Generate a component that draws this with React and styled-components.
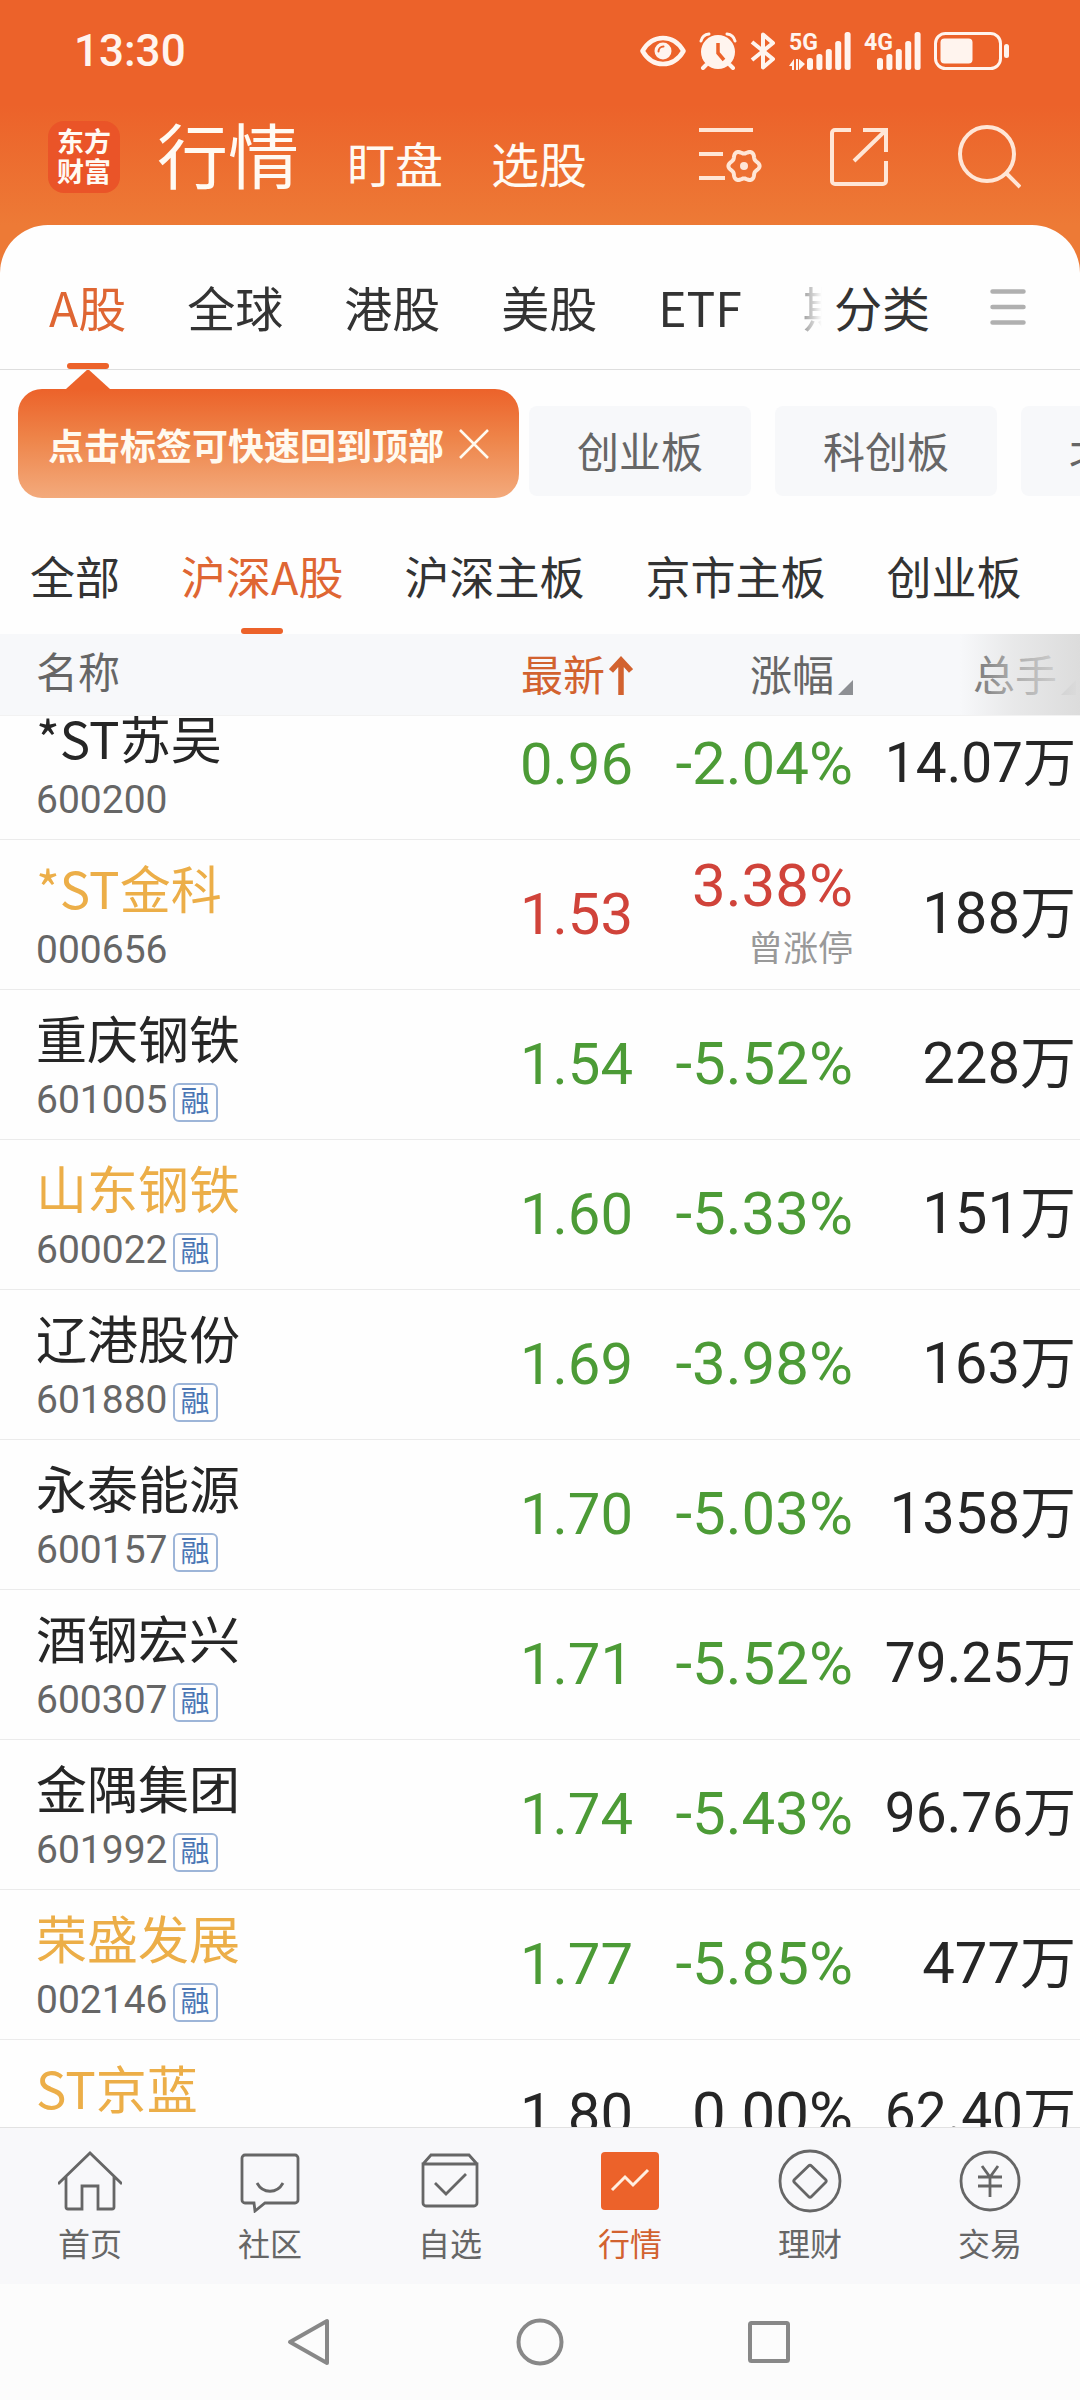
import React from "react";
import styled, { createGlobalStyle, css } from "styled-components";

const ORANGE = "#ec622a";
const INK = "#333333";
const GREY = "#666666";

const cjk = `"Noto Sans CJK SC", sans-serif`;
const digits = `Roboto, "Noto Sans CJK SC", sans-serif`;

const GlobalStyle = createGlobalStyle`
  * {
    box-sizing: border-box;
  }

  body {
    margin: 0;
    font-family: ${cjk};
    color: ${INK};
  }

  button {
    border: 0;
    padding: 0;
    background: none;
    font: inherit;
    color: inherit;
    white-space: nowrap;
    cursor: pointer;
  }

  svg {
    display: block;
    flex: none;
  }
`;

const Screen = styled.div`
  display: flex;
  flex-direction: column;
  height: 100vh;
  overflow: hidden;
  background: linear-gradient(${ORANGE} 105px, #ed7a36 225px);
`;

const StatusBar = styled.div`
  display: flex;
  flex: none;
  align-items: center;
  justify-content: space-between;
  height: 102px;
  padding: 0 70px 0 74px;
  color: #fff4ee;
`;

const Clock = styled.time`
  font: 500 44px/48px ${digits};
`;

const StatusIcons = styled.div`
  display: flex;
  align-items: center;
  gap: 13px;
`;

const TitleBar = styled.header`
  display: flex;
  flex: none;
  align-items: center;
  height: 123px;
  padding: 0 59px 14px 48px;
  color: #fffaf3;
`;

const Logo = styled.div`
  display: flex;
  flex-direction: column;
  justify-content: center;
  width: 72px;
  height: 72px;
  margin-right: 37px;
  padding-bottom: 2px;
  border-radius: 16px;
  background: #ea5428;
  font: 700 27px/30px ${cjk};
  text-align: center;
`;

const Modes = styled.nav`
  display: flex;
  flex: 1;
  align-items: baseline;
  gap: 48px;
`;

const Mode = styled.button`
  font-size: ${(p) => (p.$active ? 71 : 48)}px;
  line-height: 72px;
`;

const Tools = styled.div`
  display: flex;
  align-items: center;
  gap: 66px;
  color: #ffe6d6;
`;

const Sheet = styled.main`
  display: flex;
  flex: 1;
  flex-direction: column;
  min-height: 0;
  border-radius: 48px 48px 0 0;
  background: #fefefe;
`;

const MarketBar = styled.div`
  display: flex;
  flex: none;
  height: 145px;
  border-bottom: 1px solid #dedede;
`;

const MarketTabs = styled.nav`
  display: flex;
  flex: 1;
  gap: 61px;
  min-width: 0;
  padding-left: 49px;
  overflow: hidden;
  mask-image: linear-gradient(to right, #000 calc(100% - 40px), transparent);
`;

const underline = css`
  &::after {
    content: "";
    position: absolute;
    bottom: 0;
    left: 50%;
    width: 42px;
    height: 6px;
    margin-left: -21px;
    border-radius: 3px;
    background: ${ORANGE};
  }
`;

const Tab = styled.button`
  position: relative;
  flex: none;
  padding-top: 18px;
  font-size: ${(p) => p.$size}px;
  color: ${(p) => (p.$active ? "#df6633" : INK)};
  ${(p) => p.$active && underline}
`;

const MarketMore = styled.div`
  display: flex;
  flex: none;
  align-items: center;
  gap: 60px;
  padding: 0 54px 0 12px;

  button {
    height: 100%;
    padding-top: 18px;
    font-size: 48px;
  }
`;

const MenuButton = styled.button`
  display: flex;
  align-items: center;
  color: #b0b0b0;
`;

const FilterBar = styled.div`
  display: flex;
  flex: none;
  align-items: flex-end;
  gap: 10px;
  padding: 19px 0 0 18px;
  overflow: hidden;
`;

const Tip = styled.div`
  position: relative;
  display: flex;
  flex: none;
  align-items: center;
  gap: 15px;
  height: 109px;
  padding: 0 30px 0 30px;
  border-radius: 24px;
  background: linear-gradient(${ORANGE}, #ee8449 45%, #f3aa7c);
  color: #fffaf0;
  font-size: 36px;
  font-weight: 700;

  &::before {
    content: "";
    position: absolute;
    top: -20px;
    left: 48px;
    border: 22px solid transparent;
    border-top: 0;
    border-bottom: 20px solid ${ORANGE};
  }
`;

const Chips = styled.div`
  display: flex;
  gap: 24px;
  margin-bottom: 2px;
`;

const Chip = styled.button`
  flex: none;
  height: 90px;
  padding: 0 48px 4px;
  border-radius: 8px;
  background: #f7f8fa;
  color: ${GREY};
  font-size: 42px;
`;

const BoardTabs = styled.nav`
  display: flex;
  flex: none;
  gap: 61px;
  height: 136px;
  padding-left: 30px;
  overflow: hidden;
`;

const Table = styled.table`
  display: flex;
  flex: 1;
  flex-direction: column;
  min-height: 0;
`;

const columns = css`
  display: grid;
  grid-template-columns: 1fr 240px 220px 223px;
  padding: 0 4px 0 36px;
`;

const Head = styled.thead`
  display: block;
  flex: none;
  position: relative;
  background: #f7f8fa;
  border-bottom: 1px solid #f2f2f2;

  &::after {
    content: "";
    position: absolute;
    inset: 0 0 0 auto;
    width: 120px;
    background: linear-gradient(
      to right,
      rgba(222, 222, 222, 0),
      rgba(222, 222, 222, 0.6) 45%,
      #dcdcdc
    );
    pointer-events: none;
  }
`;

const HeadRow = styled.tr`
  ${columns}
  height: 81px;
`;

const HeadCell = styled.th`
  display: flex;
  justify-content: ${(p) => (p.$left ? "flex-start" : "flex-end")};
  padding: 0;
  color: ${(p) => (p.$active ? "#d2622f" : GREY)};
  font-size: 42px;
  line-height: ${(p) => (p.$left ? 72 : 78)}px;
  font-weight: 400;
`;

const SortButton = styled.button`
  display: flex;
  align-items: center;
  gap: 4px;
  height: 78px;
`;

/* the list is scrolled a little way under the header */
const Body = styled.tbody`
  display: block;
  flex: 1;
  min-height: 0;
  overflow: hidden;

  tr:first-child {
    margin-top: -26px;
  }
`;

const Row = styled.tr`
  ${columns}
  height: 150px;
  border-bottom: 1px solid #ebebeb;
`;

const tones = { up: "#d0433a", down: "#4c9b36", flat: "#262626" };

const NameCell = styled.td`
  padding: 17px 0 0;
`;

const StockName = styled.div`
  color: ${(p) => (p.$marked ? "#ecae48" : "#262626")};
  font-size: 51px;
  line-height: 60px;
  white-space: nowrap;
`;

const Code = styled.div`
  display: flex;
  align-items: center;
  gap: 5px;
  color: ${GREY};
  font: 400 39px/66px ${digits};
`;

const Margin = styled.span`
  height: 39px;
  padding: 0 6px;
  margin-top: 4px;
  border: 2px solid #9db5d8;
  border-radius: 6px;
  color: #4a76b5;
  font: 400 29px/35px ${digits};
`;

const NumberCell = styled.td`
  display: flex;
  flex-direction: column;
  align-items: flex-end;
  justify-content: center;
  padding: 0 0 2px;
  color: ${(p) => tones[p.$tone]};
  font: 400 ${(p) => p.$size}px/64px ${digits};
  white-space: nowrap;
`;

const Unit = styled.span`
  font-size: ${(p) => (p.$small ? 53 : 56)}px;
`;

const Note = styled.span`
  color: #999999;
  font: 400 35px/56px ${cjk};
`;

const BottomNav = styled.nav`
  display: flex;
  flex: none;
  height: 157px;
  border-top: 1px solid #e2e2e2;
  background: #f8f8fa;
`;

const NavItem = styled.a`
  display: flex;
  flex: 1;
  flex-direction: column;
  align-items: center;
  gap: 7px;
  padding-top: 21px;
  color: ${(p) => (p.$active ? "#d2622f" : GREY)};
  font-size: 32px;
  line-height: 44px;
  text-decoration: none;
`;

const SystemBar = styled.div`
  display: flex;
  flex: none;
  align-items: center;
  justify-content: center;
  gap: 183px;
  height: 116px;
  background: #fcfcfc;
  color: #888888;
`;

const EyeIcon = () => (
  <svg width="46" height="38" viewBox="0 0 46 38" fill="none" stroke="currentColor">
    <path d="M2.5 19C8 9.5 15 6 23 6s15 3.500 20.500 13C38 28.500 31 32 23 32S8 28.500 2.500 19z" strokeWidth="4.5" strokeLinejoin="round" />
    <circle cx="23" cy="19" r="8.5" fill="currentColor" stroke="none" />
    <path d="M18.5 19.5a5 5 0 0 1 5-5" stroke={ORANGE} strokeWidth="2" strokeLinecap="round" />
  </svg>
);

const AlarmIcon = () => (
  <svg width="38" height="38" viewBox="0 0 38 38" fill="none" stroke="currentColor" strokeLinecap="round">
    <circle cx="19" cy="20" r="17" fill="currentColor" stroke="none" />
    <path d="M7 33l-3 3M31 33l3 3" strokeWidth="4" />
    <path d="M2 9c1-4 4-6.5 8-7M36 9c-1-4-4-6.5-8-7" strokeWidth="3" />
    <path d="M19 11v10l6 7" stroke={ORANGE} strokeWidth="3.5" strokeLinecap="butt" />
  </svg>
);

const BluetoothIcon = () => (
  <svg width="26" height="38" viewBox="0 0 26 38" fill="none" stroke="currentColor" strokeWidth="4" strokeLinejoin="round">
    <path d="M2 10l21 17-10 8.5V2.5L23 11 2 28" />
  </svg>
);

const Signal = ({ label, width, arrows }) => {
  const tops = [26, 22, 17, 9, 0];
  const first = width - 44;
  return (
    <svg width={width} height="38" viewBox={`0 0 ${width} 38`} fill="currentColor">
      <text x="0" y="18" fontFamily="Liberation Sans Narrow, Roboto" fontWeight="700" fontSize="23">
        {label}
      </text>
      {arrows && <path d="M0 34l5-7v11h-2v-4zM7 27h2v11h-2zM10 38V27l6 5z" />}
      {tops.map((top, i) => (
        <rect key={top} x={first + i * 9.4} y={top} width="6" height={38 - top} rx="2.5" />
      ))}
    </svg>
  );
};

const BatteryIcon = () => (
  <svg width="76" height="38" viewBox="0 0 76 38" fill="currentColor">
    <rect x="1.5" y="1.5" width="65" height="35" rx="10" fill="none" stroke="currentColor" strokeWidth="3" />
    <rect x="6.5" y="6.5" width="32" height="25" rx="4" />
    <rect x="70" y="12" width="5" height="14" rx="2.5" />
  </svg>
);

const gearPath =
  Array.from({ length: 72 }, (_, i) => {
    const a = (i * Math.PI) / 36;
    const r = 14 + 1.6 * Math.cos(6 * a);
    const x = (45 + r * Math.cos(a)).toFixed(2);
    const y = (41 + r * Math.sin(a)).toFixed(2);
    return `${i ? "L" : "M"}${x} ${y}`;
  }).join("") + "z";

const ListSettingsIcon = () => (
  <svg width="64" height="64" viewBox="0 0 64 64" fill="none" stroke="currentColor" strokeWidth="4">
    <path d="M0 5h54M0 29h24M0 53h26" />
    <path d={gearPath} />
    <circle cx="45" cy="41" r="4" fill="currentColor" stroke="none" />
  </svg>
);

const ShareIcon = () => (
  <svg width="60" height="64" viewBox="0 0 60 64" fill="none" stroke="currentColor" strokeWidth="4">
    <path d="M22 5H6a3 3 0 0 0-3 3v48a3 3 0 0 0 3 3h48a3 3 0 0 0 3-3V36" />
    <path d="M34 5h23v22M57 5L25 36" />
  </svg>
);

const SearchIcon = () => (
  <svg width="66" height="64" viewBox="0 0 66 64" fill="none" stroke="currentColor" strokeWidth="4">
    <circle cx="32" cy="29" r="27" />
    <path d="M51 48l14 14" />
  </svg>
);

const MenuIcon = () => (
  <svg width="36" height="38" viewBox="0 0 36 38" stroke="currentColor" strokeWidth="4.5" strokeLinecap="round">
    <path d="M2.5 4.5h31M2.5 20h31M2.5 35.5h31" />
  </svg>
);

const CloseIcon = () => (
  <svg width="30" height="30" viewBox="0 0 30 30" stroke="currentColor" strokeWidth="2.5">
    <path d="M1 1l28 28M29 1L1 29" />
  </svg>
);

const ArrowUp = () => (
  <svg width="24" height="44" viewBox="0 0 24 44" fill="none" stroke="currentColor" strokeWidth="5.5">
    <path d="M12 44V10M2 20L12 9l10 11" />
  </svg>
);

const Corner = styled.svg`
  align-self: flex-end;
  margin-bottom: 17px;
`;

const SortCorner = () => (
  <Corner width="15" height="15" viewBox="0 0 15 15" fill="#8e9094">
    <path d="M15 0v15H0z" />
  </Corner>
);

const navShapes = {
  home: (
    <path d="M0 35L32 4l32 31M8 28v30a2 2 0 0 0 2 2h14V37h16v23h14a2 2 0 0 0 2-2V28" />
  ),
  community: (
    <path d="M7 6h50a3 3 0 0 1 3 3v42a3 3 0 0 1-3 3H27l-10 8-1-8H7a3 3 0 0 1-3-3V9a3 3 0 0 1 3-3zM19 34c6 11 20 11 26 0" />
  ),
  watch: (
    <path d="M5 15l8-9h38l8 9M5 15h54v39a3 3 0 0 1-3 3H8a3 3 0 0 1-3-3zM17 34l11 11 20-20" />
  ),
  market: (
    <>
      <rect x="3" y="3" width="58" height="58" rx="4" fill={ORANGE} stroke="none" />
      <path d="M14 41l13-13 8 8 15-15" stroke="#ffeee0" strokeWidth="3" />
    </>
  ),
  wealth: (
    <>
      <circle cx="32" cy="32" r="30" />
      <path d="M30.5 17q1.500-1.500 3 0l14 13.500q1.500 1.500 0 3l-14 14q-1.500 1.500-3 0l-14-14q-1.500-1.500 0-3z" />
    </>
  ),
  trade: (
    <>
      <circle cx="32" cy="32" r="29" />
      <path d="M24 17l8 11 8-11M20 28h24M20 37h24M32 28v20" />
    </>
  ),
};

const NavIcon = ({ name }) => (
  <svg width="64" height="64" viewBox="0 0 64 64" fill="none" stroke="currentColor" strokeWidth="2.8">
    {navShapes[name]}
  </svg>
);

const markets = ["A股", "全球", "港股", "美股", "ETF", "期"];
const chips = ["创业板", "科创板", "北"];
const boards = ["全部", "沪深A股", "沪深主板", "京市主板", "创业板"];

const stocks = [
  { name: "*ST苏吴", code: "600200", price: "0.96", change: "-2.04%", volume: "14.07", tone: "down" },
  { name: "*ST金科", code: "000656", price: "1.53", change: "3.38%", volume: "188", tone: "up", marked: true, note: "曾涨停" },
  { name: "重庆钢铁", code: "601005", price: "1.54", change: "-5.52%", volume: "228", tone: "down", margin: true },
  { name: "山东钢铁", code: "600022", price: "1.60", change: "-5.33%", volume: "151", tone: "down", marked: true, margin: true },
  { name: "辽港股份", code: "601880", price: "1.69", change: "-3.98%", volume: "163", tone: "down", margin: true },
  { name: "永泰能源", code: "600157", price: "1.70", change: "-5.03%", volume: "1358", tone: "down", margin: true },
  { name: "酒钢宏兴", code: "600307", price: "1.71", change: "-5.52%", volume: "79.25", tone: "down", margin: true },
  { name: "金隅集团", code: "601992", price: "1.74", change: "-5.43%", volume: "96.76", tone: "down", margin: true },
  { name: "荣盛发展", code: "002146", price: "1.77", change: "-5.85%", volume: "477", tone: "down", marked: true, margin: true },
  { name: "ST京蓝", price: "1.80", change: "0.00%", volume: "62.40", tone: "flat", marked: true },
];

const navItems = [
  { icon: "home", label: "首页" },
  { icon: "community", label: "社区" },
  { icon: "watch", label: "自选" },
  { icon: "market", label: "行情" },
  { icon: "wealth", label: "理财" },
  { icon: "trade", label: "交易" },
];

const StockRow = ({ stock }) => {
  const small = stock.volume.length > 4;
  return (
    <Row>
      <NameCell>
        <StockName $marked={stock.marked}>{stock.name}</StockName>
        {stock.code && (
          <Code>
            {stock.code}
            {stock.margin && <Margin>融</Margin>}
          </Code>
        )}
      </NameCell>
      <NumberCell $tone={stock.tone} $size={58}>{stock.price}</NumberCell>
      <NumberCell $tone={stock.tone} $size={60}>
        {stock.change}
        {stock.note && <Note>{stock.note}</Note>}
      </NumberCell>
      <NumberCell $tone="flat" $size={small ? 55 : 58}>
        <span>
          {stock.volume}
          <Unit $small={small}>万</Unit>
        </span>
      </NumberCell>
    </Row>
  );
};

const App = () => {
  return (
    <Screen>
      <GlobalStyle />
      <StatusBar>
        <Clock>13:30</Clock>
        <StatusIcons>
          <EyeIcon />
          <AlarmIcon />
          <BluetoothIcon />
          <Signal label="5G" width={62} arrows />
          <Signal label="4G" width={57} />
          <BatteryIcon />
        </StatusIcons>
      </StatusBar>

      <TitleBar>
        <Logo>
          <span>东方</span>
          <span>财富</span>
        </Logo>
        <Modes>
          <Mode $active>行情</Mode>
          <Mode>盯盘</Mode>
          <Mode>选股</Mode>
        </Modes>
        <Tools>
          <button aria-label="列表设置"><ListSettingsIcon /></button>
          <button aria-label="分享"><ShareIcon /></button>
          <button aria-label="搜索"><SearchIcon /></button>
        </Tools>
      </TitleBar>

      <Sheet>
        <MarketBar>
          <MarketTabs>
            {markets.map((label, i) => (
              <Tab key={label} $size={48} $active={i === 0}>{label}</Tab>
            ))}
          </MarketTabs>
          <MarketMore>
            <button>分类</button>
            <MenuButton aria-label="菜单"><MenuIcon /></MenuButton>
          </MarketMore>
        </MarketBar>

        <FilterBar>
          <Tip>
            点击标签可快速回到顶部
            <button aria-label="关闭"><CloseIcon /></button>
          </Tip>
          <Chips>
            {chips.map((label) => (
              <Chip key={label}>{label}</Chip>
            ))}
          </Chips>
        </FilterBar>

        <BoardTabs>
          {boards.map((label, i) => (
            <Tab key={label} $size={45} $active={i === 1}>{label}</Tab>
          ))}
        </BoardTabs>

        <Table>
          <Head>
            <HeadRow>
              <HeadCell $left>名称</HeadCell>
              <HeadCell $active>
                <SortButton>最新<ArrowUp /></SortButton>
              </HeadCell>
              <HeadCell>
                <SortButton>涨幅<SortCorner /></SortButton>
              </HeadCell>
              <HeadCell>
                <SortButton>总手<SortCorner /></SortButton>
              </HeadCell>
            </HeadRow>
          </Head>
          <Body>
            {stocks.map((stock) => (
              <StockRow key={stock.name} stock={stock} />
            ))}
          </Body>
        </Table>
      </Sheet>

      <BottomNav>
        {navItems.map(({ icon, label }) => (
          <NavItem key={icon} href={`#${icon}`} $active={icon === "market"}>
            <NavIcon name={icon} />
            {label}
          </NavItem>
        ))}
      </BottomNav>

      <SystemBar>
        <svg width="48" height="48" viewBox="0 0 48 48" fill="none" stroke="currentColor" strokeWidth="4" strokeLinejoin="round">
          <path d="M42 3v42L5 24z" />
        </svg>
        <svg width="48" height="48" viewBox="0 0 48 48" fill="none" stroke="currentColor" strokeWidth="4">
          <circle cx="24" cy="24" r="21.5" />
        </svg>
        <svg width="48" height="48" viewBox="0 0 48 48" fill="none" stroke="currentColor" strokeWidth="4">
          <rect x="3" y="5" width="38" height="38" rx="1.5" />
        </svg>
      </SystemBar>
    </Screen>
  );
};

export default App;
